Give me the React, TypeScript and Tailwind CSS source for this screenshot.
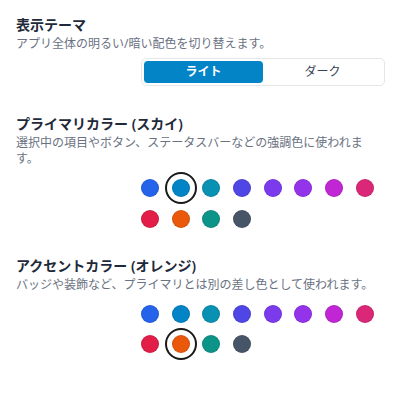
import { useState } from "react";

const swatches = [
  { key: "blue", color: "#2563eb" },
  { key: "sky", color: "#0284c7" },
  { key: "cyan", color: "#0891b2" },
  { key: "indigo", color: "#4f46e5" },
  { key: "violet", color: "#7c3aed" },
  { key: "purple", color: "#9333ea" },
  { key: "fuchsia", color: "#c026d3" },
  { key: "pink", color: "#db2777" },
  { key: "rose", color: "#e11d48" },
  { key: "orange", color: "#ea580c" },
  { key: "teal", color: "#0d9488" },
  { key: "slate", color: "#475569" },
];

function SwatchGrid({ value, onChange }: { value: string; onChange: (k: string) => void }) {
  return (
    <div className="ml-auto flex w-[244px] flex-wrap gap-[12.7px]">
      {swatches.map((s) => (
        <button
          key={s.key}
          onClick={() => onChange(s.key)}
          className={`h-[18px] w-[18px] rounded-full border border-black/10 ${
            value === s.key ? "outline-2 outline-offset-[5px] outline-[#1a1a1a]" : ""
          }`}
          style={{ backgroundColor: s.color }}
        />
      ))}
    </div>
  );
}

export default function App() {
  const [theme, setTheme] = useState("light");
  const [primary, setPrimary] = useState("sky");
  const [accent, setAccent] = useState("orange");

  return (
    <div
      className="min-h-[400px] bg-white pl-4 pr-[15px] pt-[15px]"
      style={{ fontFamily: '"Noto Sans", "Noto Sans CJK JP", sans-serif' }}
    >
      {/* 表示テーマ */}
      <section>
        <h2 className="text-[14px] leading-5 font-semibold text-gray-800">表示テーマ</h2>
        <p className="mt-px text-[12px] leading-4 text-gray-500">
          アプリ全体の明るい/暗い配色を切り替えます。
        </p>
        <div className="mt-1.5 ml-auto flex h-[28px] w-[244px] rounded-[5px] border border-gray-200 p-[2px]">
          <button
            onClick={() => setTheme("light")}
            className={`flex-1 rounded-[4px] text-[12px] ${
              theme === "light" ? "bg-[#0284c7] font-bold text-white" : "text-gray-700"
            }`}
          >
            ライト
          </button>
          <button
            onClick={() => setTheme("dark")}
            className={`flex-1 rounded-[4px] text-[12px] ${
              theme === "dark" ? "bg-[#0284c7] font-bold text-white" : "text-gray-700"
            }`}
          >
            ダーク
          </button>
        </div>
      </section>

      {/* プライマリカラー */}
      <section className="mt-[28px]">
        <h2 className="text-[14px] leading-5 font-semibold text-gray-800">プライマリカラー (スカイ)</h2>
        <p className="mt-px text-[12px] leading-4 text-gray-500">
          選択中の項目やボタン、ステータスバーなどの強調色に使われます。
        </p>
        <div className="mt-3">
          <SwatchGrid value={primary} onChange={setPrimary} />
        </div>
      </section>

      {/* アクセントカラー */}
      <section className="mt-[28px]">
        <h2 className="text-[14px] leading-5 font-semibold text-gray-800">アクセントカラー (オレンジ)</h2>
        <p className="mt-px text-[12px] leading-4 text-gray-500">
          バッジや装飾など、プライマリとは別の差し色として使われます。
        </p>
        <div className="mt-3">
          <SwatchGrid value={accent} onChange={setAccent} />
        </div>
      </section>
    </div>
  );
}
